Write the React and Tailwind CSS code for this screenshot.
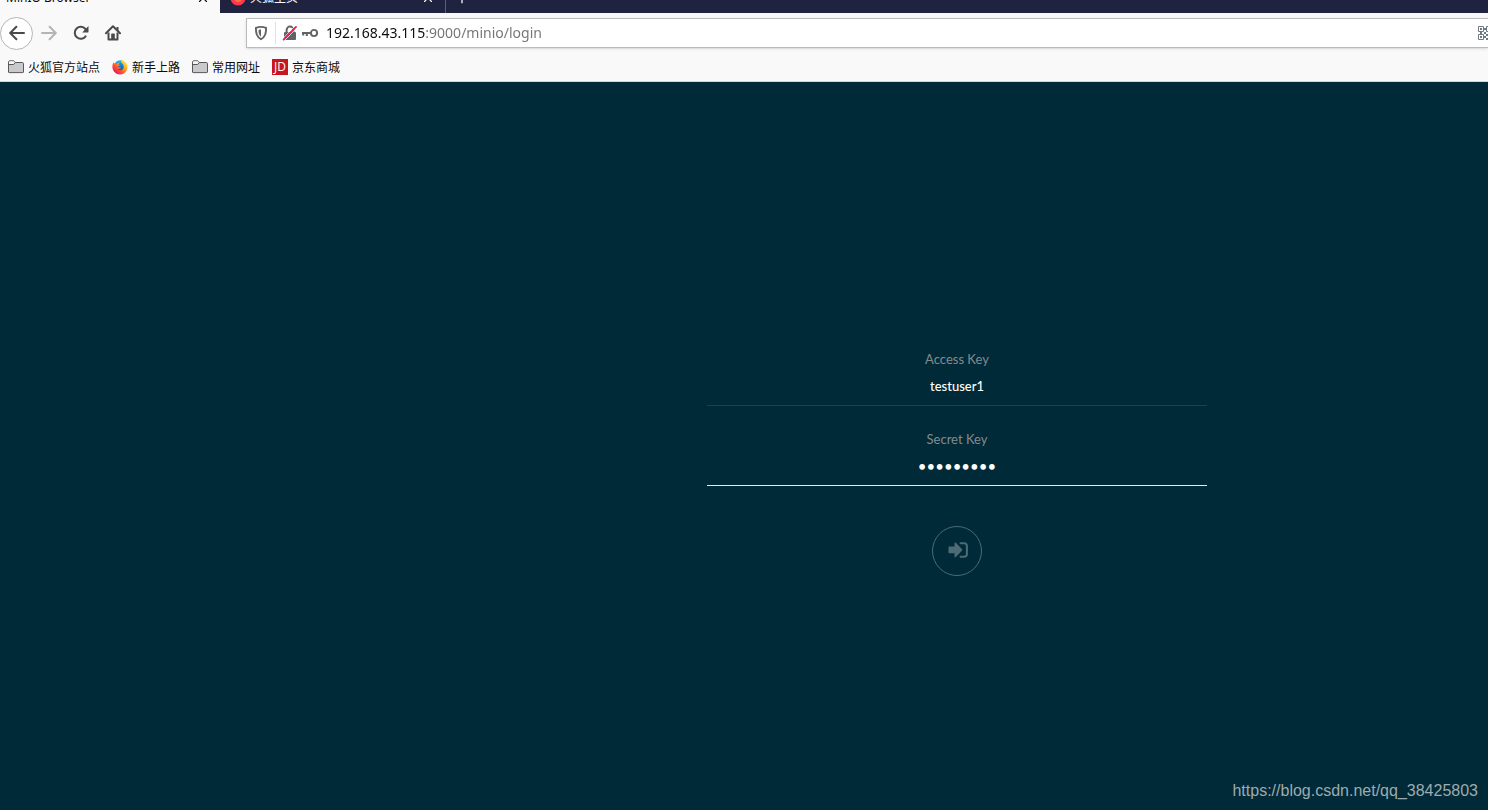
import { X, Plus } from "lucide-react";

const FolderIcon = () => (
  <svg viewBox="0 0 16 16" className="size-4 shrink-0" aria-hidden="true">
    <path
      d="M.5 13V3.2c0-.9.5-1.4 1.3-1.4h3.4c.6 0 .9.2 1.2.6l.9 1.1h7c.8 0 1.2.5 1.2 1.2V13c0 .4-.2.6-.6.6H1.1c-.4 0-.6-.2-.6-.6z"
      fill="#c9c9cc"
      stroke="#58585a"
    />
    <path d="M1 3.400c0-.7.300-1.100.9-1.100h3.200c.5 0 .7.200.9.500l.8.700-1.300 2H1z" fill="#f4f4f5" />
    <path d="M.5 5.500h5.200L7.300 3.500" fill="none" stroke="#58585a" />
  </svg>
);

const FirefoxIcon = () => (
  <svg viewBox="0 0 16 16" className="size-4 shrink-0" aria-hidden="true">
    <defs>
      <linearGradient id="fox" x1="0.9" y1="0.1" x2="0.2" y2="0.9">
        <stop offset="0" stopColor="#fff14a" />
        <stop offset="0.35" stopColor="#ffb01f" />
        <stop offset="0.65" stopColor="#ff5a2a" />
        <stop offset="1" stopColor="#ee1560" />
      </linearGradient>
      <linearGradient id="globe" x1="0.5" y1="0" x2="0.5" y2="1">
        <stop offset="0" stopColor="#12b5f5" />
        <stop offset="1" stopColor="#273a9a" />
      </linearGradient>
    </defs>
    <circle cx="8.2" cy="7.2" r="6" fill="url(#globe)" />
    <path
      d="M1.6 3.2C.8 4.5.3 6.2.4 8c.2 4.2 3.5 7.500 7.600 7.500s7.500-3.400 7.500-7.500c0-2.500-1.100-4.500-2.500-5.500.4.800.6 1.500.6 2.200C12.700 2.700 11 2 10.300.6c-.9.6-1.300 1.700-1.200 2.800 1.600 1 2.700 2.400 2.600 4.300-.1 2-1.500 3.500-3.400 3.500-1.400 0-2.300-.6-2.900-1.400 1.200.5 2.200.1 3.100-.4.5-.3.300-.9-.2-.9-1.100.1-1.500-.4-2.300-.5.100-.8.800-1.100 1.600-1.300.1-.6-.1-1-.8-1.300.1-.8.500-1.400 1.100-1.900-1.300-.1-2.300.3-3 1.200-.6-.2-1.300-.2-1.900 0-.7-.4-1.200-.9-1.400-1.500z"
      fill="url(#fox)"
    />
  </svg>
);

const JdIcon = () => (
  <span className="flex size-4 shrink-0 items-center justify-center bg-[#c8161d] font-['Open_Sans',sans-serif] text-xs leading-4 text-white">
    JD
  </span>
);

const BackIcon = () => (
  <svg viewBox="0 0 16 16" className="size-4" aria-hidden="true">
    <path
      d="M15 8H1.500M7.400 1.800 1.200 8l6.200 6.200"
      fill="none"
      stroke="currentColor"
      strokeWidth="2"
      strokeLinecap="round"
      strokeLinejoin="round"
    />
  </svg>
);

const ForwardIcon = () => (
  <svg viewBox="0 0 16 16" className="size-4" aria-hidden="true">
    <path
      d="M1 8h13.500M8.600 1.800 14.800 8l-6.200 6.200"
      fill="none"
      stroke="currentColor"
      strokeWidth="2"
      strokeLinecap="round"
      strokeLinejoin="round"
    />
  </svg>
);

const ReloadIcon = () => (
  <svg viewBox="0 0 16 16" className="size-4" aria-hidden="true">
    <path
      d="M12.600 11.400A6 6 0 1 1 12.400 4"
      fill="none"
      stroke="currentColor"
      strokeWidth="2"
      strokeLinecap="round"
    />
    <path d="M15.500 1v6.100c0 .3-.2.400-.4.400H9.200z" fill="currentColor" />
  </svg>
);

const HomeIcon = () => (
  <svg viewBox="0 0 16 16" className="size-4" aria-hidden="true">
    <path
      d="M1 8.200 8 1.200l7 7"
      fill="none"
      stroke="currentColor"
      strokeWidth="2"
      strokeLinecap="round"
      strokeLinejoin="round"
    />
    <path d="M3.500 7.500v7.100h9V7.500" fill="none" stroke="currentColor" strokeWidth="2" strokeLinejoin="round" />
    <path d="M6.200 14.500V9.200c0-.4.300-.7.700-.7h2.200c.4 0 .7.300.7.700v5.300z" fill="currentColor" />
    <path d="M11.500 2h2v4l-2-2z" fill="currentColor" />
  </svg>
);

const ShieldIcon = () => (
  <svg viewBox="0 0 16 16" className="size-4" aria-hidden="true">
    <path
      d="M8 1.900c1.900 0 3.600.4 5.100.9 0 5.300-.6 8.800-5.100 11.400C3.500 11.600 2.900 8.100 2.900 2.800 4.400 2.300 6.100 1.900 8 1.900z"
      fill="none"
      stroke="#636365"
      strokeWidth="1.9"
      strokeLinejoin="round"
    />
    <path d="M8 4.500v7.200C6 10 5.500 8 5.500 4.900 6.300 4.600 7.100 4.500 8 4.500z" fill="#636365" />
  </svg>
);

const InsecureIcon = () => (
  <svg viewBox="0 0 16 16" className="size-4" aria-hidden="true">
    <path d="M4.600 7.500V5a3.300 3.300 0 0 1 6.800 0v2.500" fill="none" stroke="#636365" strokeWidth="2" />
    <rect x="2" y="7" width="12" height="8" rx="1" fill="#636365" />
    <path d="M.8 13.700 12.900 1.200M2.700 15.300 15 2.700" stroke="#fff" strokeWidth="0.900" />
    <path d="M1.600 14.600 14 1.900" stroke="#f01d50" strokeWidth="1.9" strokeLinecap="round" />
  </svg>
);

const KeyIcon = () => (
  <svg viewBox="0 0 16 16" className="size-4" aria-hidden="true">
    <circle cx="12" cy="8" r="3.1" fill="none" stroke="#636365" strokeWidth="1.9" />
    <path d="M9 8H0M1.200 7v3.400M4.800 8v3" fill="none" stroke="#636365" strokeWidth="2" />
  </svg>
);

const QrIcon = () => (
  <svg viewBox="0 0 14 14" className="size-3.5 shrink-0" aria-hidden="true">
    <g fill="none" stroke="#6d7984">
      <path d="M.5.500h5v5h-5zM8.500.500h5v5h-5zM.5 8.500h5v5h-5z" />
    </g>
    <path
      d="M2 2h2v2H2zM10 2h2v2h-2zM2 10h2v2H2zM6 6h2v2H6zM8 8h2v2H8zM6 10h2v2H6zM8 12h2v2H8zM10 6h2v2h-2zM10 10h2v2h-2zM12 12h2v2h-2zM12 8h2v2h-2zM6 2h2v2H6zM2 6h2v2H2z"
      fill="#6d7984"
    />
  </svg>
);

const SignInIcon = () => (
  <svg viewBox="0 0 20 16" className="h-4 w-5" aria-hidden="true">
    <path
      d="M.5 5.300c0-.5.300-.8.800-.8h5.200V1.300c0-.9.800-1.200 1.400-.6l6.200 6.500c.4.400.4.900 0 1.300l-6.200 6.500c-.6.600-1.400.3-1.400-.6v-3.200H1.300c-.5 0-.8-.3-.8-.8z"
      fill="currentColor"
    />
    <path
      d="M12.500 1.200h3.800a2.600 2.600 0 0 1 2.600 2.600v8.400a2.600 2.600 0 0 1-2.600 2.600h-3.800"
      fill="none"
      stroke="currentColor"
      strokeWidth="2"
      strokeLinecap="round"
    />
  </svg>
);

const bookmarks = [
  { label: "火狐官方站点", Icon: FolderIcon },
  { label: "新手上路", Icon: FirefoxIcon },
  { label: "常用网址", Icon: FolderIcon },
  { label: "京东商城", Icon: JdIcon },
];

const TabStrip = () => (
  <div className="flex h-[13px] items-end overflow-hidden bg-[#202340] text-xs">
    <div className="flex h-[30px] w-[220px] shrink-0 items-center justify-between bg-[#f9f9fa] pr-2.5 pl-1.5 text-[#0c0c0d]">
      <span>MinIO Browser</span>
      <button type="button" aria-label="Close MinIO Browser">
        <X className="size-3.5" />
      </button>
    </div>
    <div className="flex h-[30px] w-[226px] shrink-0 items-center gap-1 border-r border-[#5c5e75] px-2.5 text-[#f9f9fa]">
      <svg viewBox="0 0 16 16" className="size-4" aria-hidden="true">
        <circle cx="8" cy="8" r="7.5" fill="#ff3750" />
        <circle cx="8" cy="8" r="4" fill="#ff7139" />
      </svg>
      <span className="flex-1">火狐主页</span>
      <button type="button" aria-label="Close 火狐主页">
        <X className="size-3.5" />
      </button>
    </div>
    <button type="button" aria-label="New tab" className="flex h-[30px] items-center pl-2 text-[#f9f9fa]">
      <Plus className="size-4" />
    </button>
  </div>
);

const NavBar = () => (
  <div className="flex h-10 items-center overflow-hidden text-[#4a4a4b]">
    <button
      type="button"
      aria-label="Back"
      className="flex size-[33px] shrink-0 items-center justify-center rounded-full border border-[#b5b5b6] bg-white"
    >
      <BackIcon />
    </button>
    <button type="button" aria-label="Forward" className="flex size-8 shrink-0 items-center justify-center text-[#b4b4b5]">
      <ForwardIcon />
    </button>
    <button type="button" aria-label="Reload" className="flex size-8 shrink-0 items-center justify-center">
      <ReloadIcon />
    </button>
    <button type="button" aria-label="Home" className="flex size-8 shrink-0 items-center justify-center">
      <HomeIcon />
    </button>
    <div className="ml-[117px] flex h-[30px] min-w-0 flex-1 items-center border border-r-0 border-[#bcbcbd] bg-white pl-1.5 shadow-sm">
      <ShieldIcon />
      <span className="mx-1.5 h-[22px] w-px bg-[#e0e0e1]" />
      <InsecureIcon />
      <span className="ml-1">
        <KeyIcon />
      </span>
      <input
        type="text"
        aria-label="Address"
        defaultValue="192.168.43.115:9000/minio/login"
        className="ml-2 h-7 min-w-0 flex-1 bg-[linear-gradient(to_right,#0c0c0d_99px,#737374_99px)] bg-clip-text pb-0.5 font-['Noto_Sans',sans-serif] text-sm text-transparent caret-black outline-none"
      />
      <div className="w-2.5 shrink-0 overflow-hidden">
        <QrIcon />
      </div>
    </div>
  </div>
);

const BookmarksBar = () => (
  <div className="flex h-[29px] items-center gap-3 border-b border-[#d5d8d9] px-2 text-xs text-[#0c0c0d]">
    {bookmarks.map(({ label, Icon }) => (
      <a key={label} href="#" className="flex items-center gap-1 whitespace-nowrap">
        <Icon />
        <span className="pt-0.5">{label}</span>
      </a>
    ))}
  </div>
);

const LoginForm = () => (
  <form
    onSubmit={(e) => e.preventDefault()}
    className="flex w-[500px] flex-col items-center font-[Lato,sans-serif] text-[13px] leading-5"
  >
    <label htmlFor="accessKey" className="text-[#848b8d]">
      Access Key
    </label>
    <input
      id="accessKey"
      type="text"
      defaultValue="testuser1"
      className="mb-[23px] h-[37px] w-full border-b border-[#1c424e] bg-transparent pb-[3px] text-center font-medium text-white outline-none"
    />
    <label htmlFor="secretKey" className="text-[#848b8d]">
      Secret Key
    </label>
    <input
      id="secretKey"
      type="password"
      defaultValue="testuser1"
      className="h-[37px] w-full border-b border-[#e6eaeb] bg-transparent pb-[3px] text-center text-[15px] text-white outline-none"
    />
    <button
      type="submit"
      aria-label="Sign in"
      className="mt-10 flex size-[50px] items-center justify-center rounded-full border border-[#4d6b75] pb-0.5 pl-0.5 text-[#4d6b75]"
    >
      <SignInIcon />
    </button>
  </form>
);

const App = () => {
  return (
    <div className="flex min-h-screen flex-col bg-[#002a37] font-['Noto_Sans','Noto_Sans_CJK_SC',sans-serif]">
      <header className="bg-[#f9f9fa]">
        <TabStrip />
        <NavBar />
        <BookmarksBar />
      </header>
      <main className="flex flex-1 flex-col items-center pt-[267px] pl-[426px]">
        <LoginForm />
      </main>
      <footer className="px-2.5 pb-[7px] text-right font-['Liberation_Sans',sans-serif] text-base leading-6 text-[#9eabaf]">
        https://blog.csdn.net/qq_38425803
      </footer>
    </div>
  );
};

export default App;
